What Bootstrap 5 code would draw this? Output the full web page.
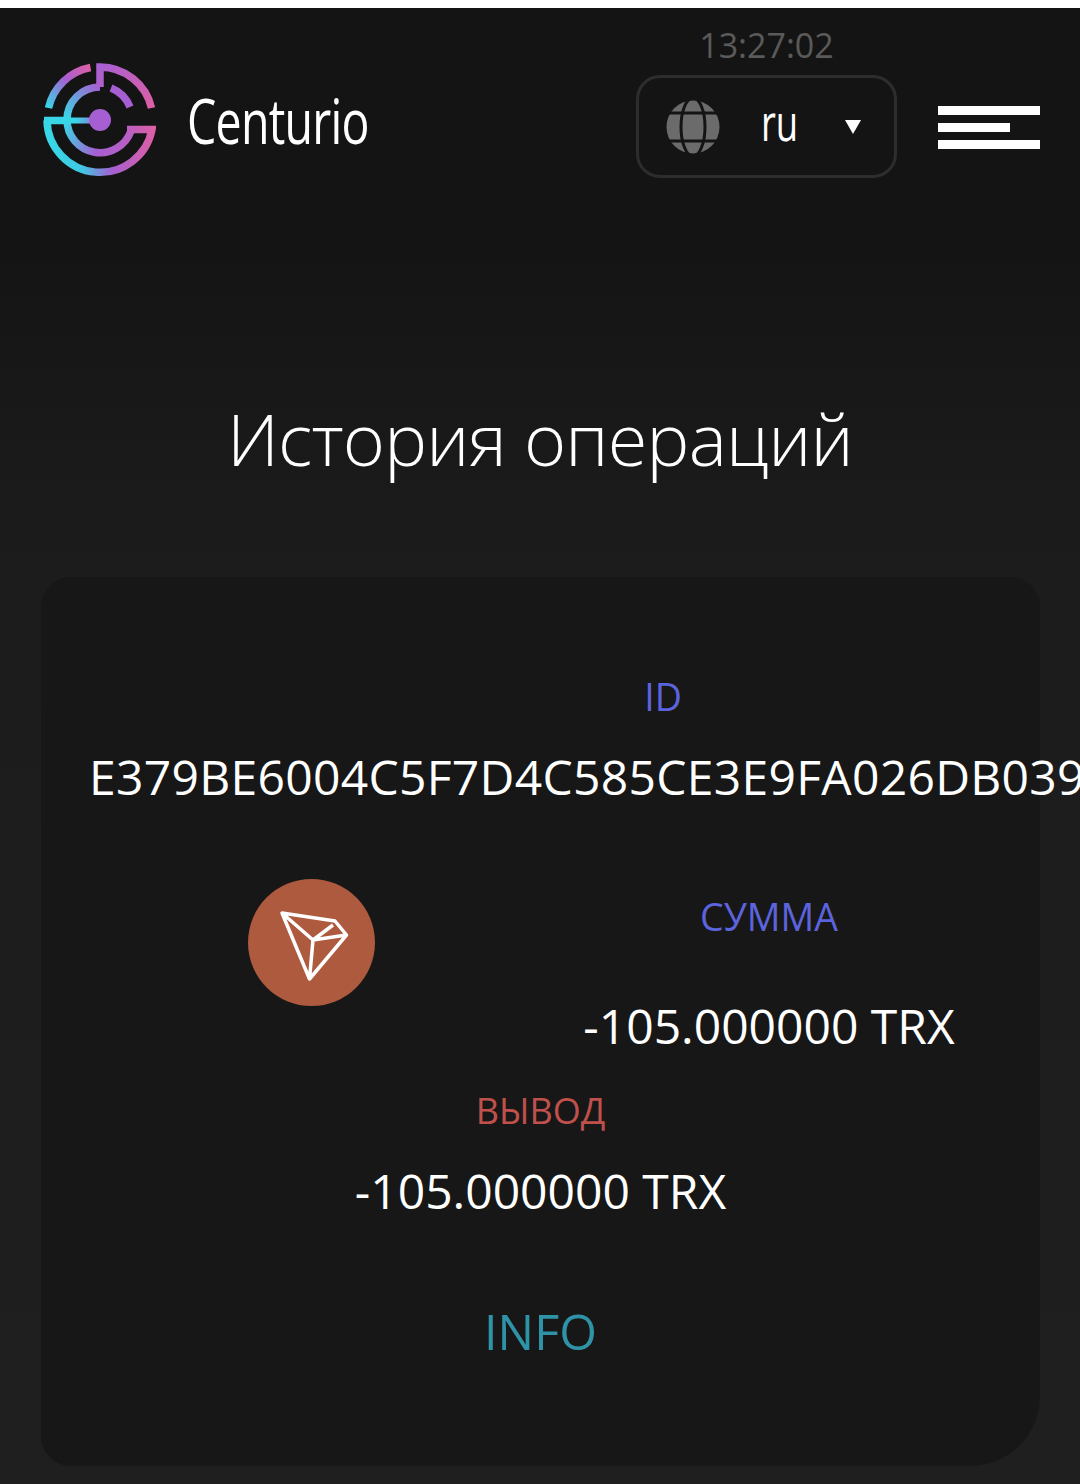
<!DOCTYPE html>
<html lang="ru">
<head>
  <meta charset="UTF-8" />
  <meta name="viewport" content="width=device-width, initial-scale=1.0" />
  <title>Centurio</title>
  <link href="https://cdn.jsdelivr.net/npm/bootstrap@5.3.2/dist/css/bootstrap.min.css" rel="stylesheet" />
  <style>
    html, body { height: 1484px; overflow: hidden; }
    body { background: linear-gradient(#141414 0, #141414 230px, #1c1c1c 560px, #1f1f1f 1484px); color: #fff; border-top: 8px solid #fff; font-family: "Open Sans", sans-serif; }
    .page-head { padding: 18px 40px 0 42px; height: 381px; }
    .brand-name { font-size: 62px; font-weight: 500; line-height: 1; color: #fff; margin-left: 31px; transform: scaleX(.75); transform-origin: left center; width: 184px; letter-spacing: -1px; }
    .logo-wrap { margin-top: 36px; }
    .time-box { width: 261px; margin-left: auto; margin-right: 41px; }
    .time-text { color: #5a5a5a; font-size: 34px; line-height: 38px; }
    .lang-box { height: 103px; border: 3px solid #2d2d2d; border-radius: 24px; margin-top: 11px; padding: 0 30px 0 27px; }
    .lang-name { font-size: 52px; font-weight: 500; transform: scaleX(.7); line-height: 1; margin: -12px 0 0 33px; }
    .caret-down { width: 0; height: 0; border-left: 8.500px solid transparent; border-right: 8.500px solid transparent; border-top: 14px solid #fff; margin-left: 39px; }
    .burger { width: 102px; margin-top: 80px; }
    .burger span { display: block; height: 9px; background: #fff; margin-bottom: 8px; }
    .burger span:nth-child(2) { width: 72px; }
    .page-title { font-size: 72px; font-weight: 300; line-height: 98px; margin: 0; letter-spacing: -.8px; }
    .op-card { margin: 90px 40px 0 41px; height: 889px; background: #171717; border: 0; border-radius: 30px 30px 70px 30px; color: #fff; padding-top: 98px; }
    .id-block { width: 1148px; margin-left: 48px; }
    .op-label { font-size: 37.500px; line-height: 44px; }
    .label-blue { color: #5b63dd; }
    .label-red { color: #c0504c; font-size: 36px; }
    .op-value { font-size: 48px; line-height: 62px; }
    .hash-text { margin-top: 27px; text-align: left; white-space: nowrap; letter-spacing: .3px; }
    .amount-row { margin-top: 71px; }
    .tron-coin { margin-left: 207px; flex: none; }
    .amount-col { width: 372px; margin-left: 208px; padding-top: 16px; }
    .amount-col .op-value { margin-top: 56px; white-space: nowrap; }
    .out-block { margin-top: 32px; }
    .out-block .op-value { margin-top: 27px; }
    .info-link { color: #2f93a8; font-size: 48.500px; line-height: 62px; margin-top: 78px; }
  </style>
</head>
<body>
  <header class="page-head d-flex align-items-start">
    <div class="logo-wrap d-flex align-items-center">
      <svg width="114" height="116" viewBox="41 62 114 116" fill="none">
        <defs>
          <linearGradient id="arcLeft" gradientUnits="userSpaceOnUse" x1="48" y1="108" x2="89" y2="67">
            <stop offset="0" stop-color="#38d6e6" />
            <stop offset=".55" stop-color="#a65fd2" />
            <stop offset="1" stop-color="#dc5fa6" />
          </linearGradient>
          <linearGradient id="arcRight" gradientUnits="userSpaceOnUse" x1="99" y1="67" x2="150" y2="108">
            <stop offset="0" stop-color="#a860d2" />
            <stop offset="1" stop-color="#dc5fa6" />
          </linearGradient>
          <linearGradient id="ringTop" gradientUnits="userSpaceOnUse" x1="66" y1="120" x2="99" y2="87">
            <stop offset="0" stop-color="#38d6e6" />
            <stop offset="1" stop-color="#a65fd2" />
          </linearGradient>
          <linearGradient id="ringIn" gradientUnits="userSpaceOnUse" x1="66" y1="115" x2="132" y2="135">
            <stop offset="0" stop-color="#38d6e6" />
            <stop offset=".55" stop-color="#a65fd2" />
            <stop offset="1" stop-color="#b95fc4" />
          </linearGradient>
          <linearGradient id="ringOut" gradientUnits="userSpaceOnUse" x1="50" y1="130" x2="152" y2="130">
            <stop offset="0" stop-color="#38d6e6" />
            <stop offset=".3" stop-color="#3fc8e4" />
            <stop offset=".6" stop-color="#a65fd2" />
            <stop offset="1" stop-color="#dc5fa6" />
          </linearGradient>
          <linearGradient id="barIn" gradientUnits="userSpaceOnUse" x1="46" y1="120" x2="99" y2="120">
            <stop offset="0" stop-color="#38d6e6" />
            <stop offset=".55" stop-color="#38d6e6" />
            <stop offset="1" stop-color="#a65fd2" />
          </linearGradient>
        </defs>
        <g stroke-width="7.500">
          <path d="M89.500 67.500 A53 53 0 0 0 47.500 108" stroke="url(#arcLeft)" />
          <path d="M99 87 V67 A53 53 0 0 1 150.500 108" stroke="url(#arcRight)" />
          <path d="M99 87 A33 33 0 0 0 66 120" stroke="url(#ringTop)" />
          <path d="M66 120 A33 33 0 0 0 130 131" stroke="url(#ringIn)" />
          <path d="M126 129.500 H151 A53 53 0 0 1 46 120.500" stroke="url(#ringOut)" />
          <path d="M110 88 A34 34 0 0 1 129 107" stroke="#a65fd2" />
          <path d="M43 120.500 H70" stroke="#38d6e6" />
          <path d="M66 120.500 H99" stroke="url(#barIn)" stroke-width="6" />
        </g>
        <circle cx="99" cy="120" r="11" fill="#a65fd2" />
      </svg>
      <div class="brand-name">Centurio</div>
    </div>
    <div class="time-box text-center">
      <div class="time-text">13:27:02</div>
      <div class="lang-box d-flex align-items-center">
        <svg width="54" height="54" viewBox="0 0 54 54">
          <circle cx="27" cy="27" r="26.500" fill="#6b6b6b" />
          <ellipse cx="27" cy="27" rx="12" ry="29" fill="none" stroke="#141414" stroke-width="3" />
          <path d="M0 13H54M0 41H54" stroke="#141414" stroke-width="3" />
        </svg>
        <span class="lang-name">ru</span>
        <span class="caret-down"></span>
      </div>
    </div>
    <div class="burger"><span></span><span></span><span></span></div>
  </header>

  <h1 class="page-title text-center">История операций</h1>

  <main class="card op-card">
    <div class="id-block text-center">
      <div class="op-label label-blue">ID</div>
      <div class="op-value hash-text">E379BE6004C5F7D4C585CE3E9FA026DB039</div>
    </div>
    <div class="amount-row d-flex align-items-start">
      <svg class="tron-coin" width="127" height="127" viewBox="0 0 127 127" fill="none">
        <circle cx="63.500" cy="63.500" r="63.500" fill="#ad5a3f" />
        <path d="M34 34 L87 42 L98.500 56 L61.500 100 Z M34 34 L65 61 L61.500 100 M65 61 L98.500 56 M65 61 L85 46" stroke="#fff" stroke-width="3.500" stroke-linejoin="round" />
      </svg>
      <div class="amount-col text-center">
        <div class="op-label label-blue">СУММА</div>
        <div class="op-value">-105.000000 TRX</div>
      </div>
    </div>
    <div class="out-block text-center">
      <div class="op-label label-red">ВЫВОД</div>
      <div class="op-value">-105.000000 TRX</div>
    </div>
    <div class="info-link text-center">INFO</div>
  </main>

  <script src="https://cdn.jsdelivr.net/npm/bootstrap@5.3.2/dist/js/bootstrap.bundle.min.js"></script>
</body>
</html>
